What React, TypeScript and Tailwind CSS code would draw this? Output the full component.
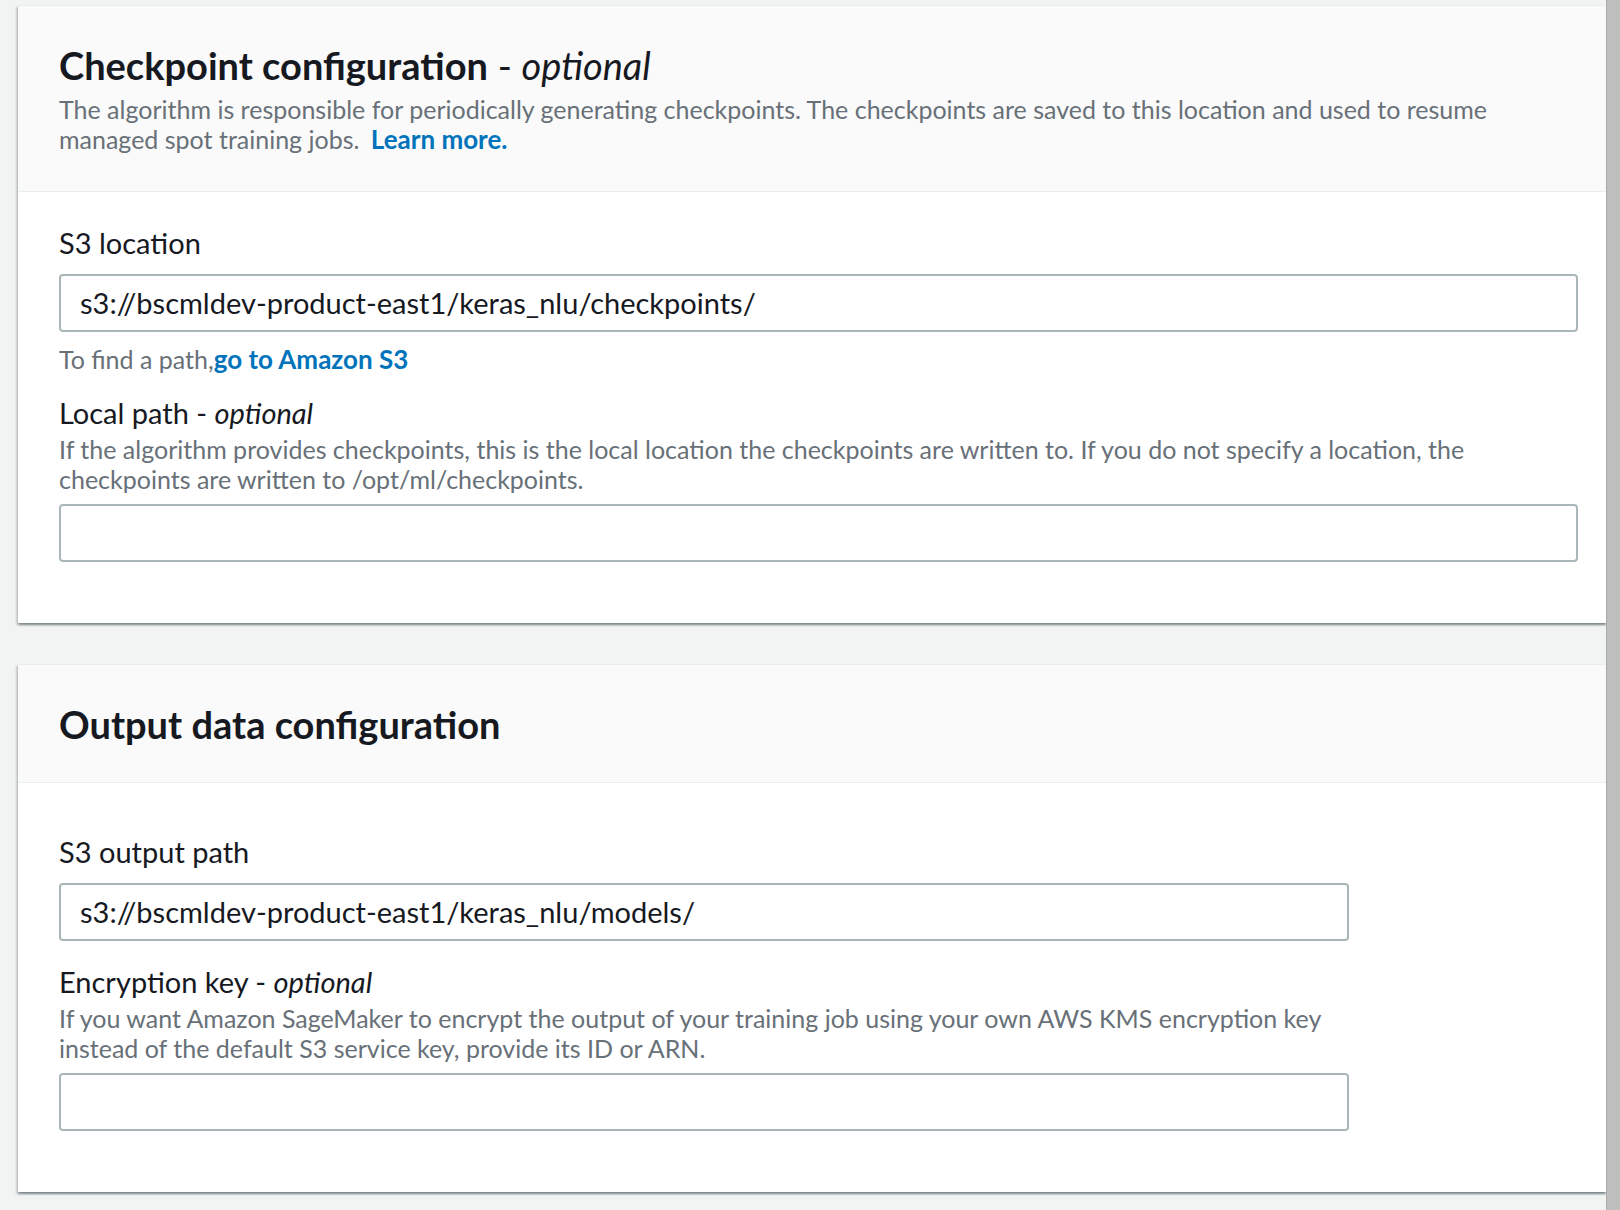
import React from 'react';

interface FieldProps {
  label: string;
  optional?: boolean;
  description?: string;
  value?: string;
  width?: string;
  children?: React.ReactNode;
}

const Field: React.FC<FieldProps> = ({ label, optional, description, value = '', width = 'w-full', children }) => (
  <div className={width}>
    <div className="text-[29px] leading-[36px] text-[#16191f]">
      {label}
      {optional && (
        <>
          {' - '}
          <i>optional</i>
        </>
      )}
    </div>
    {description && (
      <p className="mt-[3px] text-[25px] leading-[30px] text-[#687078]">{description}</p>
    )}
    <div
      className={`w-full ${description ? 'mt-[10px]' : 'mt-[13px]'} h-[58px] rounded-[4px] border-2 border-[#aab7b8] bg-white pl-[19px] flex items-center text-[29px] text-[#16191f]`}
    >
      {value}
    </div>
    {children}
  </div>
);

const Card: React.FC<{ header: React.ReactNode; bodyTop: string; children: React.ReactNode }> = ({
  header,
  bodyTop,
  children,
}) => (
  <section className="bg-white border-t border-[#eaeded] shadow-[0_2px_2px_0_rgba(0,28,36,0.3),2px_2px_2px_0_rgba(0,28,36,0.15),-2px_2px_2px_0_rgba(0,28,36,0.15)]">
    <div className="bg-[#fafafa] border-b border-[#eaeded] pl-[41px] pr-[28px] pt-[37px]">{header}</div>
    <div className={`pl-[41px] pr-[28px] ${bodyTop} pb-[61px]`}>{children}</div>
  </section>
);

export default function App() {
  return (
    <div className="flex min-h-[1210px] bg-[#f2f3f3] font-['Lato',sans-serif]">
      <main className="flex-1 pl-[18px] pt-[5px] flex flex-col gap-[41px]">
        <Card
          bodyTop="pt-[33px]"
          header={
            <div className="pb-[37px]">
              <h2 className="text-[38px] leading-[44px] text-[#16191f]">
                <span className="font-bold">Checkpoint configuration</span> - <i>optional</i>
              </h2>
              <p className="mt-[7px] text-[25px] leading-[30px] text-[#687078]">
                The algorithm is responsible for periodically generating checkpoints. The checkpoints are saved to this
                location and used to resume managed spot training jobs.{' '}
                <a className="ml-[5px] font-bold text-[26px] text-[#0073bb]">Learn more.</a>
              </p>
            </div>
          }
        >
          <Field label="S3 location" value="s3://bscmldev-product-east1/keras_nlu/checkpoints/">
            <p className="mt-[12px] text-[25px] leading-[30px] text-[#687078]">
              To find a path,<a className="font-bold text-[26px] text-[#0073bb]">go to Amazon S3</a>
            </p>
          </Field>
          <div className="mt-[21px]">
            <Field
              label="Local path"
              optional
              description="If the algorithm provides checkpoints, this is the local location the checkpoints are written to. If you do not specify a location, the checkpoints are written to /opt/ml/checkpoints."
            />
          </div>
        </Card>

        <Card
          bodyTop="pt-[51px]"
          header={
            <div className="pb-[36px]">
              <h2 className="text-[38px] leading-[44px] font-bold text-[#16191f]">Output data configuration</h2>
            </div>
          }
        >
          <Field label="S3 output path" value="s3://bscmldev-product-east1/keras_nlu/models/" width="w-[1290px]" />
          <div className="mt-[23px]">
            <Field
              label="Encryption key"
              optional
              width="w-[1290px]"
              description="If you want Amazon SageMaker to encrypt the output of your training job using your own AWS KMS encryption key instead of the default S3 service key, provide its ID or ARN."
            />
          </div>
        </Card>
      </main>
      <div className="w-[14px] shrink-0 bg-[#bfbfbf] border-l border-[#a9a9a9]" />
    </div>
  );
}
